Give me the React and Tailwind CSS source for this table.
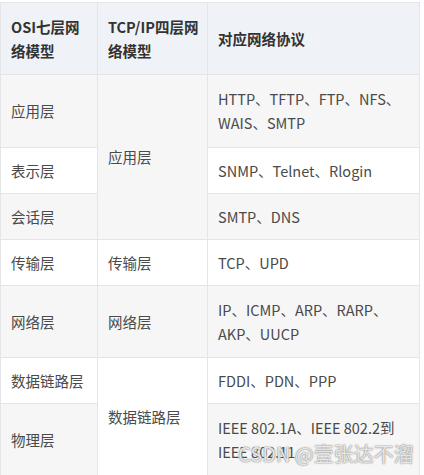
import React from "react";

const F = { fontFamily: '"Noto Sans CJK SC", "Noto Sans", sans-serif' };

export default function App() {
  const td = "border border-[#e3e5e8] px-[10px] align-middle text-[14.5px] leading-[24px] text-[#4a4a4a]";
  const th = "border border-[#e3e5e8] px-[10px] align-middle text-left text-[14.5px] leading-[24px] font-bold text-[#333]";
  return (
    <div className="relative w-[424px] h-[475px] overflow-hidden bg-white pt-[2px]" style={F}>
      <table className="table-fixed border-collapse w-[419px]">
        <colgroup>
          <col className="w-[97px]" />
          <col className="w-[110px]" />
          <col className="w-[212px]" />
        </colgroup>
        <thead>
          <tr className="h-[72px] bg-[#eff2f6]">
            <th className={th}>OSI七层网络模型</th>
            <th className={th + " pr-[6px]"}>TCP/IP四层网络模型</th>
            <th className={th}>对应网络协议</th>
          </tr>
        </thead>
        <tbody>
          <tr className="h-[73px]">
            <td className={td + " bg-[#f6f6f6]"}>应用层</td>
            <td className={td + " bg-[#f6f6f6]"} rowSpan={3}>应用层</td>
            <td className={td + " bg-[#f6f6f6]"}>HTTP、TFTP、FTP、NFS、WAIS、SMTP</td>
          </tr>
          <tr className="h-[46px]">
            <td className={td + " bg-white"}>表示层</td>
            <td className={td + " bg-white"}>SNMP、Telnet、Rlogin</td>
          </tr>
          <tr className="h-[46px]">
            <td className={td + " bg-[#f6f6f6]"}>会话层</td>
            <td className={td + " bg-[#f6f6f6]"}>SMTP、DNS</td>
          </tr>
          <tr className="h-[46px]">
            <td className={td + " bg-white"}>传输层</td>
            <td className={td + " bg-white"}>传输层</td>
            <td className={td + " bg-white"}>TCP、UPD</td>
          </tr>
          <tr className="h-[72px]">
            <td className={td + " bg-[#f6f6f6]"}>网络层</td>
            <td className={td + " bg-[#f6f6f6]"}>网络层</td>
            <td className={td + " bg-[#f6f6f6]"}>IP、ICMP、ARP、RARP、AKP、UUCP</td>
          </tr>
          <tr className="h-[46px]">
            <td className={td + " bg-white"}>数据链路层</td>
            <td className={td + " bg-white"} rowSpan={2}>数据链路层</td>
            <td className={td + " bg-white"}>FDDI、PDN、PPP</td>
          </tr>
          <tr className="h-[72px]">
            <td className={td + " bg-[#f6f6f6]"}>物理层</td>
            <td className={td + " bg-[#f6f6f6]"}>IEEE 802.1A、IEEE 802.2到IEEE 802.11</td>
          </tr>
        </tbody>
      </table>
      <div className="absolute left-[238px] top-[441px] text-[20px] leading-[26px] text-white/80 whitespace-nowrap [text-shadow:0_0_1px_#777,0_0_2px_#999]">
        CSDN @壹张达不溜
      </div>
    </div>
  );
}
